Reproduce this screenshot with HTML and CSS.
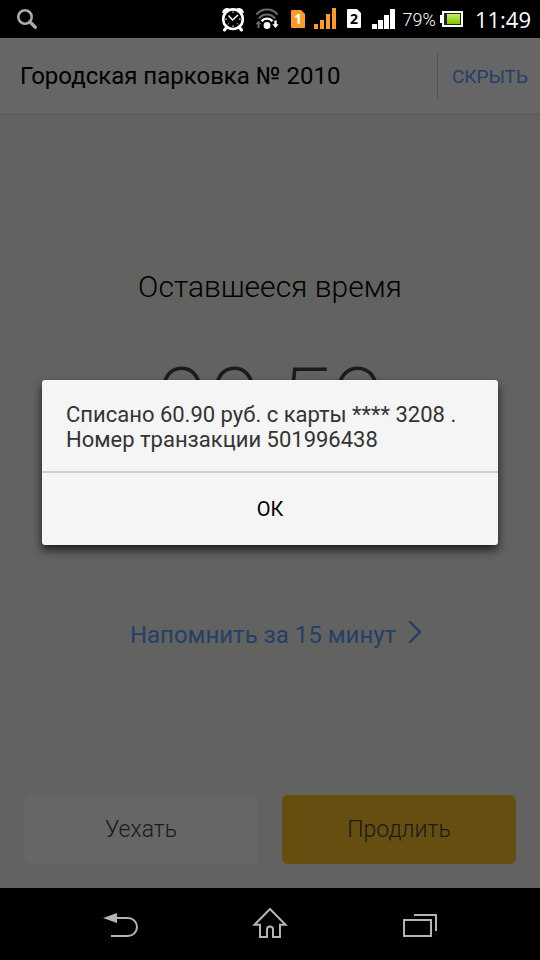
FILE: index.html
```html
<!DOCTYPE html>
<html lang="ru">

<head>
	<meta charset="UTF-8">
	<meta name="viewport" content="width=device-width, initial-scale=1">
	<title>Городская парковка</title>
	<link rel="stylesheet" href="styles.css">
</head>

<body>
	<div class="status-bar">
		<svg class="search" width="22" height="22" viewBox="0 0 22 22">
			<circle cx="9" cy="9" r="6.7" fill="none" stroke="#aaa" stroke-width="2.6" />
			<path d="M13.8 13.8L19.3 19.3" stroke="#aaa" stroke-width="3.4" stroke-linecap="round" />
		</svg>

		<div class="status-icons">
			<!-- Alarm -->
			<svg width="24" height="26" viewBox="0 0 24 26">
				<path d="M2 6.5A4 4 0 0 1 7.500 3zM22 6.5A4 4 0 0 0 16.500 3z" fill="#fff" stroke="#fff" stroke-width="1.5" stroke-linejoin="round" />
				<path d="M5.5 21.5L3.5 24M18.5 21.5L20.5 24" stroke="#fff" stroke-width="3" stroke-linecap="round" />
				<circle cx="12" cy="13.2" r="9.8" fill="#000" stroke="#fff" stroke-width="2.6" />
				<path d="M7.5 9.5L11.5 14L17 9" fill="none" stroke="#fff" stroke-width="1.5" />
				<path d="M12 5.5v1.6M12 19.3v1.6M4.4 13.2h1.6M18 13.2h1.6M6.8 18.4l1-1M17.2 18.4l-1-1" stroke="#fff" stroke-width="1" />
			</svg>

			<!-- Wi-Fi -->
			<svg class="wifi" width="24" height="22" viewBox="0 0 24 22">
				<path d="M1.5 6.5A13.5 13.5 0 0 1 22.5 6.5" fill="none" stroke="#6b6b6b" stroke-width="2.2" />
				<path d="M4 10.5A10 10 0 0 1 20 10.5" fill="none" stroke="#6b6b6b" stroke-width="2.2" />
				<path d="M6.6 13.3A6.8 6.8 0 0 1 17.4 13.3" fill="none" stroke="#fff" stroke-width="2.4" />
				<circle cx="12" cy="17.5" r="3.4" fill="#fff" />
				<path d="M3.5 12.5L0.5 16.2h2v3.8h2v-3.8h2z" fill="#6b6b6b" />
				<path d="M20.5 20L17.3 16.2h2v-3.7h2.4v3.7h2z" fill="#fff" />
			</svg>

			<svg class="sim-1" width="14" height="18" viewBox="0 0 14 18">
				<path d="M1 0h9l4 4v13a1 1 0 0 1-1 1h-12a1 1 0 0 1-1-1v-16a1 1 0 0 1 1-1z" fill="#ff9a27" />
				<text class="sim-number sim-number-light" x="7" y="14" text-anchor="middle">1</text>
			</svg>
			<svg class="signal-1" width="22" height="22" viewBox="0 0 22 22">
				<path d="M0 16h4v5h-4zM6 12h4v9h-4zM12 6h4v15h-4zM18 0h4v21h-4z" fill="#ff9a27" />
			</svg>
			<svg class="sim-2" width="14" height="20" viewBox="0 0 14 20">
				<path d="M1 0h9l4 4v14a1 1 0 0 1-1 1h-12a1 1 0 0 1-1-1v-17a1 1 0 0 1 1-1z" fill="#fff" />
				<text class="sim-number" x="7" y="15" text-anchor="middle">2</text>
			</svg>
			<svg class="signal-2" width="23" height="20" viewBox="0 0 23 20">
				<path d="M0 15h5v5h-5zM6 11h5v9h-5zM12 6h5v14h-5zM18 0h5v20h-5z" fill="#fff" />
			</svg>
			<span class="percent">79%</span>

			<!-- Battery -->
			<svg class="battery" width="23" height="16" viewBox="0 0 23 16">
				<defs>
					<linearGradient id="charge" x1="0" y1="0" x2="0" y2="1">
						<stop offset="0" stop-color="#c6f05a" />
						<stop offset="1" stop-color="#7cc400" />
					</linearGradient>
				</defs>
				<path d="M0 4h3v8h-3zM2 0h21v16h-21z" fill="#fff" />
				<path d="M4 2h17v12h-17z" fill="#222" />
				<path d="M7 3h13v10h-13z" fill="url(#charge)" />
			</svg>
		</div>
		<span class="clock">11:49</span>
	</div>

	<div class="app">
		<header class="header">
			<h1 class="title">Городская парковка № 2010</h1>
			<button class="hide" type="button">СКРЫТЬ</button>
		</header>

		<main class="content">
			<h2 class="subtitle">Оставшееся время</h2>
			<div class="timer">00:59</div>
			<a class="remind" href="#">
				Напомнить за 15 минут
				<svg width="14" height="24" viewBox="0 0 14 24">
					<path d="M2 3L12 13L2 23" fill="none" stroke="currentColor" stroke-width="2.4" stroke-linecap="round" />
				</svg>
			</a>
		</main>

		<div class="actions">
			<button class="action" type="button">Уехать</button>
			<button class="action action-primary" type="button">Продлить</button>
		</div>

		<!-- Dialog over the dimmed screen -->
		<div class="overlay">
			<div class="dialog" role="alertdialog" aria-labelledby="message">
				<p class="message" id="message">Списано 60.90 руб. с карты **** 3208 . Номер транзакции 501996438</p>
				<button class="ok" type="button">ОК</button>
			</div>
		</div>
	</div>

	<nav class="nav-bar">
		<button class="nav-button" type="button" aria-label="Назад">
			<svg width="36" height="36" viewBox="0 0 36 36">
				<path d="M1 12L15 7v10z" fill="#b4b4b4" />
				<path d="M14 12h12a9 9 0 0 1 0 18h-17" fill="none" stroke="#b4b4b4" stroke-width="2" />
			</svg>
		</button>
		<button class="nav-button" type="button" aria-label="Домой">
			<svg width="36" height="36" viewBox="0 0 36 36">
				<path d="M18 3L2.5 18.7h5.5v12.3h7v-7.5a3 3 0 0 1 6 0v7.5h7v-12.3h5.5z" fill="none" stroke="#b4b4b4" stroke-width="2" />
			</svg>
		</button>
		<button class="nav-button" type="button" aria-label="Недавние">
			<svg width="36" height="36" viewBox="0 0 36 36">
				<path d="M2 14h27v16h-27zM12 9h22v16" fill="none" stroke="#b4b4b4" stroke-width="2" />
			</svg>
		</button>
	</nav>
</body>

</html>
```
FILE: styles.css
```css
* {
	box-sizing: border-box;
}

html {
	height: 100%;
}

body {
	display: flex;
	flex-direction: column;
	min-height: 100%;
	margin: 0;
	background: #000;
	font-family: Roboto, sans-serif;
}

svg {
	display: block;
	flex: none;
}

button {
	padding: 0;
	border: 0;
	background: none;
	font-family: inherit;
}

/* Status bar */
.status-bar {
	display: flex;
	align-items: center;
	justify-content: space-between;
	height: 38px;
	padding: 0 9px 0 16px;
	color: #fff;
	font-family: "Open Sans", sans-serif;
}

.status-icons {
	display: flex;
	align-items: center;
	margin-left: auto;
}

.wifi {
	margin-left: 10px;
}

.sim-1 {
	margin-left: 12px;
}

.signal-1 {
	margin-left: 9px;
}

.sim-2 {
	margin-left: 11px;
}

.signal-2 {
	margin-left: 11px;
}

.sim-number {
	font-size: 14px;
	font-weight: 700;
}

.sim-number-light {
	fill: #fff;
}

.percent {
	margin-left: 8px;
	font-family: Roboto, sans-serif;
	font-size: 18px;
	font-weight: 300;
}

.battery {
	margin-left: 4px;
}

.clock {
	margin-left: 12px;
	font-size: 22px;
	line-height: 38px;
}

/* App */
.app {
	position: relative;
	display: flex;
	flex: 1;
	flex-direction: column;
	background: #f6f5f0;
}

.header {
	display: flex;
	align-items: center;
	height: 77px;
	padding-left: 20px;
	border-bottom: 1px solid #e0e0de;
	background: #fff;
}

.title {
	flex: 1;
	margin: 0;
	color: #000;
	font-size: 24px;
	font-weight: 400;
}

.hide {
	height: 46px;
	padding: 0 12px 0 14px;
	border-left: 1px solid #ccc;
	color: #5aa0ff;
	font-size: 19px;
}

.content {
	display: flex;
	flex: 1;
	flex-direction: column;
	align-items: center;
	padding-top: 152px;
}

.subtitle {
	margin: 0;
	color: #000;
	font-size: 30px;
	font-weight: 300;
	line-height: 40px;
}

.timer {
	margin-top: 40px;
	color: #444;
	font-size: 96px;
	font-weight: 200;
	line-height: 112px;
}

.remind {
	display: flex;
	gap: 12px;
	margin: 160px 0 0 12px;
	color: #5aa0ff;
	font-size: 24px;
	line-height: 32px;
	text-decoration: none;
}

.actions {
	display: flex;
	gap: 24px;
	padding: 24px;
}

.action {
	flex: 1;
	height: 69px;
	border-radius: 6px;
	background: #fff;
	color: #444;
	font-size: 23px;
	font-weight: 300;
}

.action-primary {
	background: #ffc228;
}

/* Dialog */
.overlay {
	position: absolute;
	inset: 0;
	display: flex;
	align-items: center;
	justify-content: center;
	padding: 0 42px 2px;
	background: rgba(0, 0, 0, .6);
}

.dialog {
	width: 100%;
	border-radius: 3px;
	background: #f5f5f5;
	box-shadow: 0 5px 10px rgba(0, 0, 0, .7);
}

.message {
	margin: 0;
	padding: 22px 24px 19px;
	border-bottom: 2px solid #cfcfcf;
	color: #333;
	font-size: 22px;
	line-height: 25px;
}

.ok {
	display: block;
	width: 100%;
	height: 72px;
	color: #000;
	font-size: 20px;
}

/* Navigation bar */
.nav-bar {
	display: flex;
	justify-content: center;
	gap: 114px;
	height: 72px;
}

.nav-button {
	display: flex;
	align-items: center;
}
```
